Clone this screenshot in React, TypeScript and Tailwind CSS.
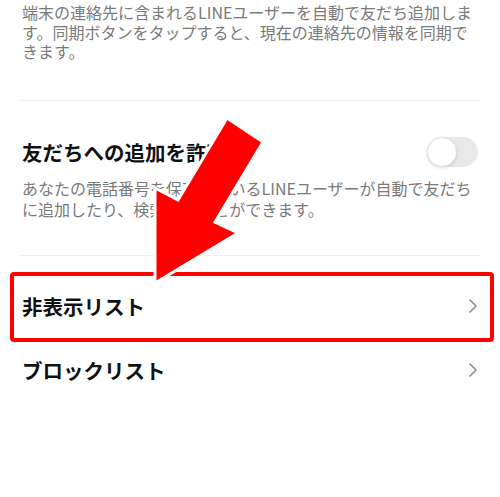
import React from "react";

const FONT = { fontFamily: '"Noto Sans CJK JP", "Noto Sans", sans-serif' };

function Chevron() {
  return (
    <svg width="10" height="16" viewBox="0 0 10 16" fill="none" className="shrink-0">
      <path d="M2 2l6 6-6 6" stroke="#8e8e8e" strokeWidth="1.6" strokeLinecap="round" strokeLinejoin="round" />
    </svg>
  );
}

function Row({ label }: { label: string }) {
  return (
    <div className="flex h-[64px] items-center justify-between pl-[22px] pr-[22px]">
      <span className="text-[20.5px] font-bold text-[#111]">{label}</span>
      <Chevron />
    </div>
  );
}

export default function App() {
  return (
    <div className="relative h-[497px] w-[500px] overflow-hidden bg-white" style={FONT}>
      {/* 連絡先の自動追加の説明 */}
      <div className="h-[100px] px-[22px] pt-[3px] text-[16px] leading-[19.5px] text-[#7a7a7a] whitespace-nowrap">
        <div>端末の連絡先に含まれるLINEユーザーを自動で友だち追加しま</div>
        <div>す。同期ボタンをタップすると、現在の連絡先の情報を同期で</div>
        <div>きます。</div>
      </div>
      <div className="mx-[20px] h-px bg-[#efefef]" />

      {/* 友だちへの追加を許可 */}
      <div className="h-[154px] px-[22px] pt-[36px]">
        <div className="flex items-center justify-between">
          <span className="text-[20.5px] font-bold leading-[30px] text-[#111]">友だちへの追加を許可</span>
          <div className="relative h-[30px] w-[51px] rounded-full bg-[#e9e9e9]">
            <div className="absolute left-0 top-0 h-[30px] w-[30px] rounded-full border border-[#e2e2e2] bg-white shadow-[0_1px_3px_rgba(0,0,0,0.15)]" />
          </div>
        </div>
        <div className="mt-[11px] text-[16px] leading-[21px] text-[#7a7a7a] whitespace-nowrap">
          <div>あなたの電話番号を保有しているLINEユーザーが自動で友だち</div>
          <div>に追加したり、検索することができます。</div>
        </div>
      </div>
      <div className="mx-[20px] h-px bg-[#efefef]" />

      <div className="pt-[18px]">
        <Row label="非表示リスト" />
        <Row label="ブロックリスト" />
      </div>

      {/* 注釈: 赤枠 */}
      <div className="absolute left-[10px] top-[272px] h-[70px] w-[484px] rounded-[4px] border-[4px] border-[#f00]" />

      {/* 注釈: 赤い矢印 */}
      <svg className="absolute left-0 top-0" width="500" height="497" viewBox="0 0 500 497">
        <polygon
          points="227,118 263,142 215,222 238,233 155,283 155,188 178,200"
          fill="#f00"
          stroke="#fff"
          strokeWidth="3"
          strokeLinejoin="miter"
        />
      </svg>
    </div>
  );
}
